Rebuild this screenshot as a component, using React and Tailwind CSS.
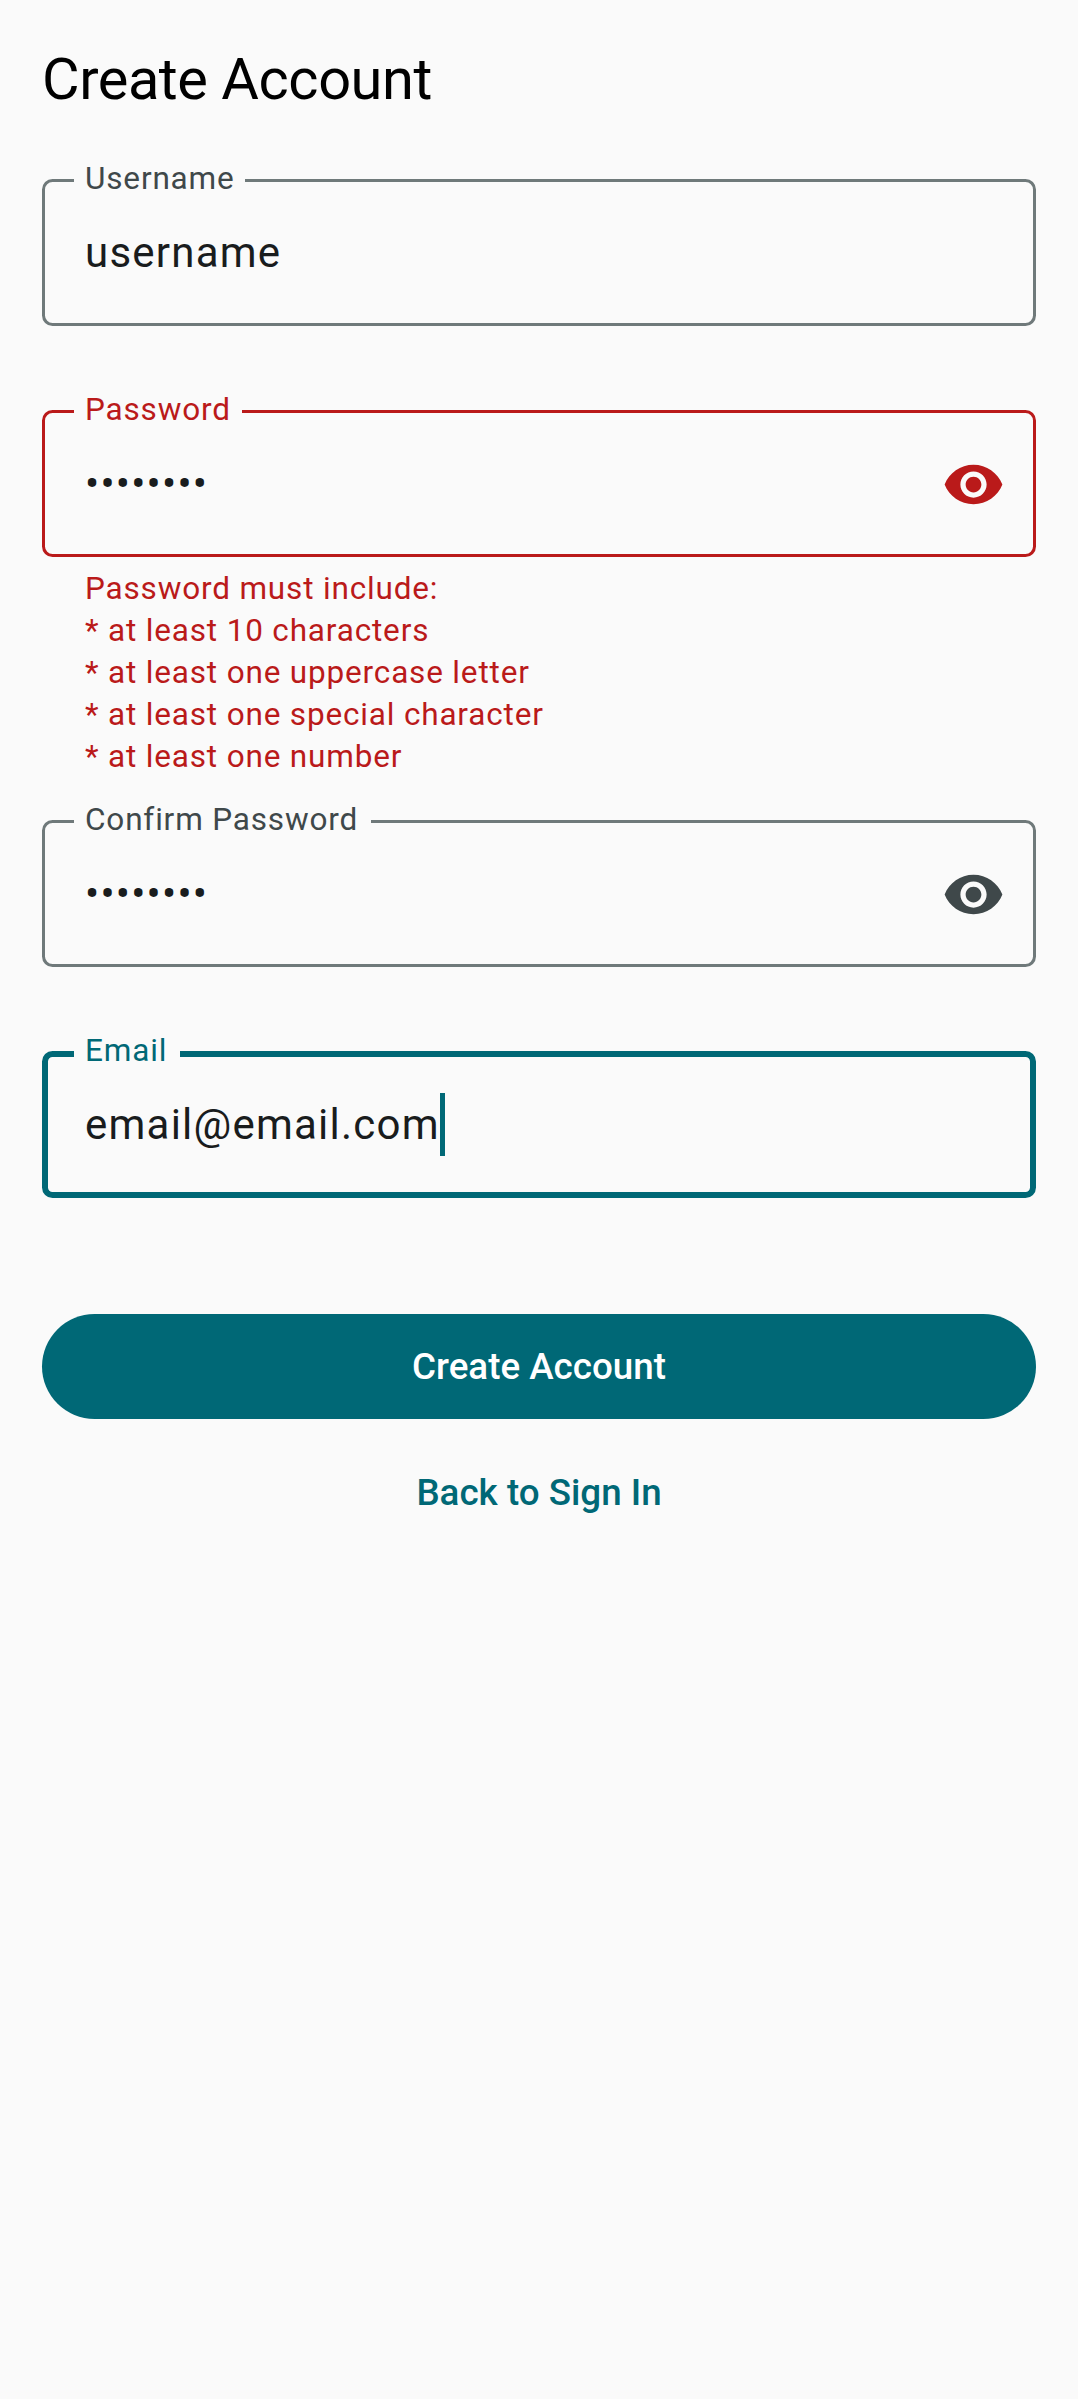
import React from "react";

function EyeIcon({ className }) {
  return (
    <svg viewBox="0 0 24 24" className={`size-[63px] shrink-0 fill-current ${className}`} aria-hidden="true">
      <path d="M12 4.5C7 4.5 2.73 7.61 1 12c1.73 4.39 6 7.5 11 7.5s9.27-3.11 11-7.5c-1.73-4.39-6-7.5-11-7.5zM12 17c-2.76 0-5-2.24-5-5s2.24-5 5-5 5 2.24 5 5-2.24 5-5 5zm0-8c-1.66 0-3 1.34-3 3s1.34 3 3 3 3-1.34 3-3-1.34-3-3-3z" />
    </svg>
  );
}

const tones = {
  normal: { border: "border-[3px] border-[#6f797a] px-[40px]", label: "text-[#3f484a]", icon: "text-[#3f484a]" },
  error: { border: "border-[3px] border-[#ba1a1a] px-[40px]", label: "text-[#ba1a1a]", icon: "text-[#ba1a1a]" },
  focused: { border: "border-[6px] border-[#006876] px-[37px]", label: "text-[#006876]", icon: "text-[#006876]" },
};

function Field({ label, value, tone = "normal", notch, secret, caret, className }) {
  const t = tones[tone];
  return (
    <div className={`relative h-[147px] ${className}`}>
      <div className={`flex h-full items-center rounded-[10.5px] ${t.border}`}>
        <span className="text-[42px] leading-[63px] tracking-[1.23px] text-[#191c1d]">{value}</span>
        {caret && <span className="h-[63px] w-[5px] bg-[#006876]" />}
        {secret && <EyeIcon className={`mt-px -mr-[12px] ml-auto ${t.icon}`} />}
      </div>
      <label
        className={`absolute -top-[21px] left-[32px] bg-[#fafafa] pl-[11px] text-[31.5px] leading-[42px] tracking-[0.83px] whitespace-nowrap ${notch} ${t.label}`}
      >
        {label}
      </label>
    </div>
  );
}

export default function App() {
  return (
    <main className="flex min-h-[2399px] flex-col bg-[#fafafa] px-[42px] pt-[42px] font-['Roboto',sans-serif]">
      <h1 className="h-[73px] text-[57.75px] leading-[74px] tracking-[-0.45px] text-black">Create Account</h1>

      <Field label="Username" value="username" notch="w-[171px]" className="mt-16" />
      <Field label="Password" value="••••••••" tone="error" notch="w-[168px]" secret className="mt-[84px]" />
      <div className="mt-[11px] h-[210px] px-[43px] text-[31.5px] leading-[42px] tracking-[0.83px] text-[#ba1a1a]">
        <p>Password must include:</p>
        <p>* at least 10 characters</p>
        <p>* at least one uppercase letter</p>
        <p>* at least one special character</p>
        <p>* at least one number</p>
      </div>
      <Field label="Confirm Password" value="••••••••" notch="w-[297px]" secret className="mt-[42px]" />
      <Field label="Email" value="email@email.com" tone="focused" notch="w-[106px]" caret className="mt-[84px]" />

      <button className="mt-[116px] h-[105px] rounded-full bg-[#006876] text-[36.75px] font-medium text-white">
        Create Account
      </button>
      <button className="mt-[21px] h-[105px] rounded-full text-[36.75px] font-medium text-[#006876]">
        Back to Sign In
      </button>
    </main>
  );
}
